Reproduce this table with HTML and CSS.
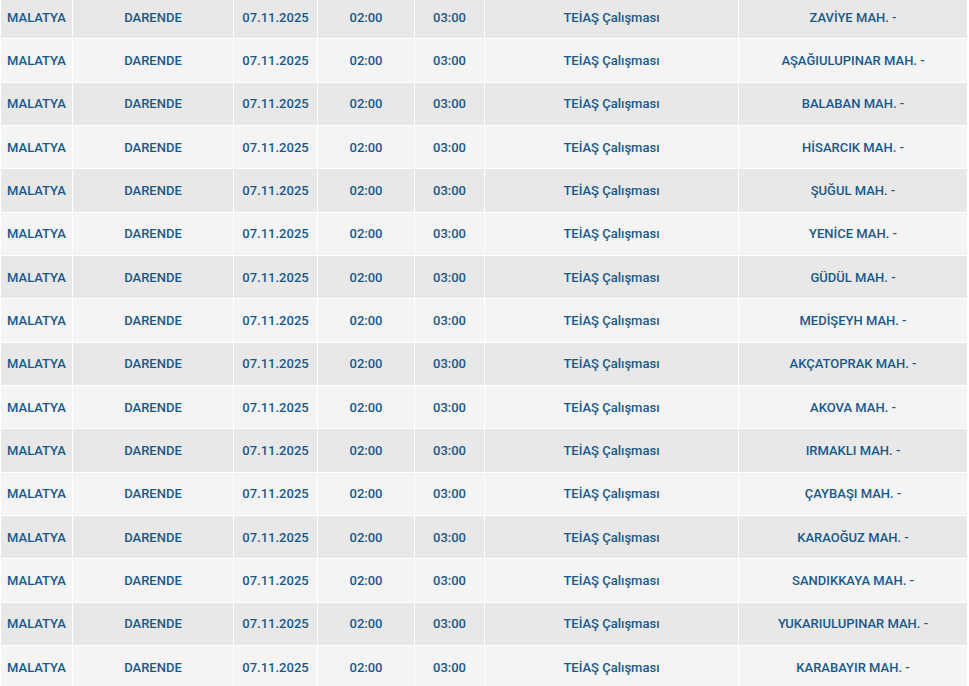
FILE: index.html
```html
<!DOCTYPE html>
<html lang="tr">
<head>
<meta charset="utf-8">
<title>Kesinti Listesi</title>
<link rel="stylesheet" href="styles.css">
</head>
<body>
<table class="outages">
<colgroup>
<col class="c-il"><col class="c-ilce"><col class="c-tarih"><col class="c-bas"><col class="c-bit"><col class="c-neden"><col class="c-yer">
</colgroup>
<tbody>
<tr><td>MALATYA</td><td>DARENDE</td><td>07.11.2025</td><td>02:00</td><td>03:00</td><td>TEİAŞ Çalışması</td><td>ZAVİYE MAH. -</td></tr>
<tr><td>MALATYA</td><td>DARENDE</td><td>07.11.2025</td><td>02:00</td><td>03:00</td><td>TEİAŞ Çalışması</td><td>AŞAĞIULUPINAR MAH. -</td></tr>
<tr><td>MALATYA</td><td>DARENDE</td><td>07.11.2025</td><td>02:00</td><td>03:00</td><td>TEİAŞ Çalışması</td><td>BALABAN MAH. -</td></tr>
<tr><td>MALATYA</td><td>DARENDE</td><td>07.11.2025</td><td>02:00</td><td>03:00</td><td>TEİAŞ Çalışması</td><td>HİSARCIK MAH. -</td></tr>
<tr><td>MALATYA</td><td>DARENDE</td><td>07.11.2025</td><td>02:00</td><td>03:00</td><td>TEİAŞ Çalışması</td><td>ŞUĞUL MAH. -</td></tr>
<tr><td>MALATYA</td><td>DARENDE</td><td>07.11.2025</td><td>02:00</td><td>03:00</td><td>TEİAŞ Çalışması</td><td>YENİCE MAH. -</td></tr>
<tr><td>MALATYA</td><td>DARENDE</td><td>07.11.2025</td><td>02:00</td><td>03:00</td><td>TEİAŞ Çalışması</td><td>GÜDÜL MAH. -</td></tr>
<tr><td>MALATYA</td><td>DARENDE</td><td>07.11.2025</td><td>02:00</td><td>03:00</td><td>TEİAŞ Çalışması</td><td>MEDİŞEYH MAH. -</td></tr>
<tr><td>MALATYA</td><td>DARENDE</td><td>07.11.2025</td><td>02:00</td><td>03:00</td><td>TEİAŞ Çalışması</td><td>AKÇATOPRAK MAH. -</td></tr>
<tr><td>MALATYA</td><td>DARENDE</td><td>07.11.2025</td><td>02:00</td><td>03:00</td><td>TEİAŞ Çalışması</td><td>AKOVA MAH. -</td></tr>
<tr><td>MALATYA</td><td>DARENDE</td><td>07.11.2025</td><td>02:00</td><td>03:00</td><td>TEİAŞ Çalışması</td><td>IRMAKLI MAH. -</td></tr>
<tr><td>MALATYA</td><td>DARENDE</td><td>07.11.2025</td><td>02:00</td><td>03:00</td><td>TEİAŞ Çalışması</td><td>ÇAYBAŞI MAH. -</td></tr>
<tr><td>MALATYA</td><td>DARENDE</td><td>07.11.2025</td><td>02:00</td><td>03:00</td><td>TEİAŞ Çalışması</td><td>KARAOĞUZ MAH. -</td></tr>
<tr><td>MALATYA</td><td>DARENDE</td><td>07.11.2025</td><td>02:00</td><td>03:00</td><td>TEİAŞ Çalışması</td><td>SANDIKKAYA MAH. -</td></tr>
<tr><td>MALATYA</td><td>DARENDE</td><td>07.11.2025</td><td>02:00</td><td>03:00</td><td>TEİAŞ Çalışması</td><td>YUKARIULUPINAR MAH. -</td></tr>
<tr><td>MALATYA</td><td>DARENDE</td><td>07.11.2025</td><td>02:00</td><td>03:00</td><td>TEİAŞ Çalışması</td><td>KARABAYIR MAH. -</td></tr>
</tbody>
</table>
</body>
</html>
```
FILE: styles.css
```css
html, body {
  margin: 0;
  padding: 0;
  background: #ffffff;
  overflow: hidden;
}

.outages {
  width: 967px;
  margin-top: -5px;
  border-collapse: collapse;
  table-layout: fixed;
  font-family: Roboto, "Liberation Sans", sans-serif;
  font-size: 13px;
  font-weight: 500;
  color: #1a5889;
}

.c-il { width: 72px; }
.c-ilce { width: 161px; }
.c-tarih { width: 84px; }
.c-bas { width: 97px; }
.c-bit { width: 70px; }
.c-neden { width: 254px; }
.c-yer { width: 229px; }

.outages tr {
  height: 43.33px;
}

.outages tr:nth-child(odd) {
  background: #e8e8e8;
}

.outages tr:nth-child(even) {
  background: #f4f4f4;
}

.outages td {
  padding: 0 4px;
  text-align: center;
  vertical-align: middle;
  border: 1px solid #ffffff;
  white-space: nowrap;
}
```
